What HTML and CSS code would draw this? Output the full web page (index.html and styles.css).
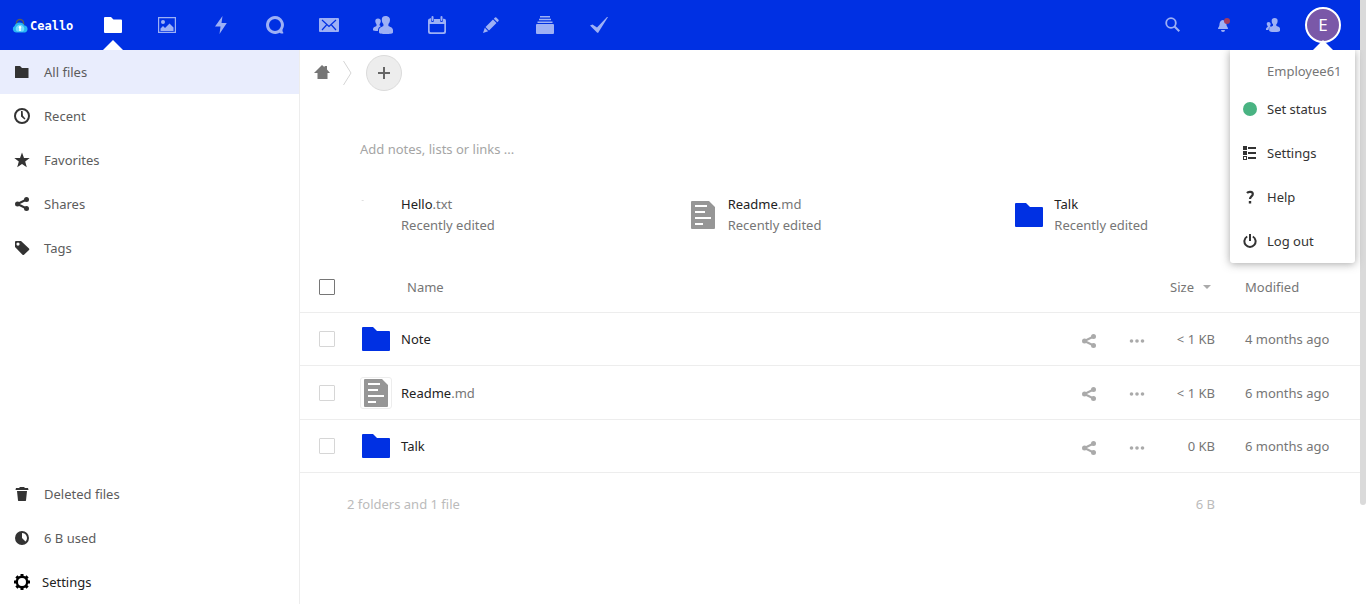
FILE: index.html
```html
<!DOCTYPE html>
<html lang="en">
<head>
<meta charset="utf-8">
<title>Files - Ceallo</title>
<link rel="stylesheet" href="styles.css">
</head>
<body>
<svg class="sprite" aria-hidden="true">
  <symbol id="folder" viewBox="0 0 28 24"><path d="M1 0h10l4 4h12a1 1 0 0 1 1 1v18a1 1 0 0 1-1 1H1a1 1 0 0 1-1-1V1a1 1 0 0 1 1-1z"/></symbol>
  <symbol id="doc" viewBox="0 0 24 28"><path fill-rule="evenodd" d="M1 0h17l6 6v21a1 1 0 0 1-1 1H1a1 1 0 0 1-1-1V1a1 1 0 0 1 1-1zM4 4v2h12V4zm0 6v2h10v-2zm0 6v2h16v-2zm0 6v2h8v-2z"/></symbol>
  <symbol id="share" viewBox="0 0 16 16"><path d="M3.500 8 12.500 3.500M3.500 8l9 4.500" fill="none" stroke="currentColor" stroke-width="2"/><circle cx="3.500" cy="8" r="2.500"/><circle cx="12.500" cy="3.500" r="2.500"/><circle cx="12.500" cy="12.500" r="2.500"/></symbol>
  <symbol id="more" viewBox="0 0 16 16"><circle cx="2.500" cy="8" r="1.800"/><circle cx="8" cy="8" r="1.800"/><circle cx="13.500" cy="8" r="1.800"/></symbol>
</svg>
<div class="page">
  <header class="topbar">
    <a class="logo" href="#">
      <svg width="16" height="16" viewBox="0 0 16 16"><path d="M4.500 7V5a3.500 3.500 0 0 1 7 0V7" fill="none" stroke="#5b5b58" stroke-width="1.500"/><path d="M4 14.500a3.500 3.500 0 0 1-1.500-6.500A5.500 5.500 0 0 1 12.500 7.500a3.600 3.600 0 0 1 .5 7z" fill="#27b4f4"/><path d="M5 13.500a3.500 3.500 0 0 1 0-5.500 4 4 0 0 1 6 0 3.500 3.500 0 0 1 0 5.500z" fill="#71d8ff"/><path d="M8 8a1.300 1.300 0 0 1 .7 2.400V13H7.300v-2.600A1.300 1.300 0 0 1 8 8z" fill="#fff"/></svg>
      <span>Ceallo</span>
    </a>
    <nav class="apps" aria-label="Apps">
      <a class="app current" href="#" aria-label="Files"><svg width="18" height="16" viewBox="0 0 18 16"><path d="M1 0h6l2.500 2.500H17a1 1 0 0 1 1 1V15a1 1 0 0 1-1 1H1a1 1 0 0 1-1-1V1a1 1 0 0 1 1-1z"/></svg></a>
      <a class="app" href="#" aria-label="Photos"><svg width="18" height="16" viewBox="0 0 18 16"><path fill-rule="evenodd" d="M0 0h18v16H0zM1.200 1.200v13.600h15.600V1.200z"/><circle cx="5" cy="5" r="2"/><path d="M2.500 14V11.500L5 9l2 2 4.500-4.500 4 4V14z"/></svg></a>
      <a class="app" href="#" aria-label="Activity"><svg width="20" height="20" viewBox="0 0 20 20"><path d="M11.500 1 4 11.500h5.500L8.500 19l7.300-11H10.500z"/></svg></a>
      <a class="app" href="#" aria-label="Talk"><svg width="20" height="20" viewBox="0 0 20 20"><path fill-rule="evenodd" d="M10 1a9 9 0 1 0 4.700 16.700c1 .8 2.300 1.100 3.300.8.500-.2.500-.6.200-1-.6-.8-.8-1.800-.7-2.700A9 9 0 0 0 10 1zm0 3a6 6 0 1 1 0 12 6 6 0 0 1 0-12z"/></svg></a>
      <a class="app" href="#" aria-label="Mail"><svg width="20" height="14" viewBox="0 0 20 14"><rect width="20" height="14" rx="1"/><path d="M3 2l7 6.500L17 2M3 12l4.500-5M17 12l-4.500-5" fill="none" stroke="#0030e3" stroke-width="1.200"/></svg></a>
      <a class="app" href="#" aria-label="Contacts"><svg width="20" height="20" viewBox="0 0 20 20"><path d="M12.500 1C10 1 8.600 2.600 8.800 5c.1 2 .8 3.200 1.600 4v2c-1 .8-4.400 1.500-4.400 4v2.500c0 1 3 1.500 7 1.500s7-.5 7-1.500V15c0-2.500-3.400-3.200-4.600-4V9c.8-.8 1.500-2 1.600-4 .2-2.400-1.900-4-4.500-4zM5 3.500c-1.800 0-2.900 1.200-2.700 3 .1 1.200.6 2 1.200 2.700V11C2.500 11.500 0 12 0 14v1.200c0 .5 2 .8 5 .8v-1c0-2 1.500-3.200 3-4l-1.400-.6V9.200c.6-.7 1-1.500 1.200-2.700.2-1.800-1-3-2.800-3z"/></svg></a>
      <a class="app" href="#" aria-label="Calendar"><svg width="18" height="18" viewBox="0 0 18 18"><path fill-rule="evenodd" d="M3 2v2.500a1 1 0 0 0 3 0V3h6v1.500a1 1 0 0 0 3 0V2.700h1a2 2 0 0 1 2 2V16a2 2 0 0 1-2 2H2a2 2 0 0 1-2-2V4.500a2 2 0 0 1 2-2zM1.700 8v7a1.300 1.300 0 0 0 1.300 1.300h12a1.300 1.300 0 0 0 1.300-1.300V8z"/><rect x="3.500" width="2" height="5" rx="1"/><rect x="12.500" width="2" height="5" rx="1"/></svg></a>
      <a class="app" href="#" aria-label="Notes"><svg width="16" height="16" viewBox="0 0 16 16"><path d="M12 .5a1 1 0 0 1 1.300 0l2.200 2.200a1 1 0 0 1 0 1.300l-1.200 1.200-3.500-3.500zM10 2.500 13.500 6 6 13.500 2.500 10zM1.800 10.800l3.400 3.400L0 16z"/></svg></a>
      <a class="app" href="#" aria-label="Deck"><svg width="18" height="18" viewBox="0 0 18 18"><rect y="8" width="18" height="10" rx="1"/><path d="M4 0h10v1.500H4zM3 2.700h12v1.500H3zM1.500 5.400h15v1.500h-15z"/></svg></a>
      <a class="app" href="#" aria-label="Tasks"><svg width="18" height="16" viewBox="0 0 18 16"><path d="M0 8.500 2.500 7.500 7 10.500 17 0h1L8 16 7 15.500z"/></svg></a>
    </nav>
    <div class="tools">
      <button class="tool" aria-label="Search"><svg width="16" height="16" viewBox="0 0 16 16"><circle cx="6" cy="6" r="4.800" fill="none" stroke="currentColor" stroke-width="1.800"/><path d="M9.300 9.300l5 5" stroke="currentColor" stroke-width="2"/></svg></button>
      <button class="tool" aria-label="Notifications"><svg width="16" height="16" viewBox="0 0 16 16"><path d="M7.500 3C5 3.500 4.500 6 4.400 8c0 1.500-1.400 2.200-1.400 4h10c0-2-1.500-2.500-1.500-4 0-3-1-4.500-4-5zM6 13h4a2 2 0 0 1-4 0z"/><circle class="alert" cx="12" cy="4" r="3"/></svg></button>
      <button class="tool" aria-label="Contacts menu"><svg width="16" height="16" viewBox="0 0 16 16"><path d="M9.700 1C7.500 1 6.500 2.300 6.700 4.200c.1 1.500.6 2.500 1.300 3.100v1.500c-.8.700-3.800 1-3.800 3v2c0 .8 2.500 1.200 5.500 1.200s5.300-.4 5.300-1.200v-2c0-2-2.800-2.300-3.700-3V7.300c.7-.6 1.200-1.600 1.300-3.100C12.800 2.300 11.800 1 9.700 1zM3.500 5C2.200 5 1.600 6 1.800 7.200c0 .8.400 1.400.9 1.800v1C2 10.500 1 10.700 1 12v1h2.500c0-2 1-3 2.500-3.500L4.800 9c.5-.5.9-1 .9-1.800C5.800 6 4.800 5 3.500 5z"/></svg></button>
      <button class="tool account" aria-label="Account menu"><span class="avatar">E</span></button>
    </div>
    <div class="menu">
      <p class="menu-user">Employee61</p>
      <a href="#"><svg width="14" height="14" viewBox="0 0 14 14"><circle cx="7" cy="7" r="7" fill="#49b382"/></svg>Set status</a>
      <a href="#"><svg width="14" height="14" viewBox="0 0 14 14"><path fill-rule="evenodd" d="M0 0h4v4H0zM0 5h4v4H0zM0 10h4v4H0zM1 11v2h2v-2zM5 1h8v2H5zM5 6h8v2H5zM5 11h8v2H5z"/></svg>Settings</a>
      <a href="#"><svg width="14" height="14" viewBox="0 0 14 14"><path d="M4 3C5.500 1.200 9.800 1.500 9.800 4 9.800 6.500 7 6.300 7 9" fill="none" stroke="currentColor" stroke-width="2.200"/><rect x="5.800" y="11" width="2.400" height="2.500"/></svg>Help</a>
      <a href="#"><svg width="14" height="14" viewBox="0 0 14 14"><path d="M4.200 2.500a5.600 5.600 0 1 0 5.600 0M7 0v7" fill="none" stroke="currentColor" stroke-width="2"/></svg>Log out</a>
    </div>
  </header>
  <div class="body">
    <nav class="sidebar" aria-label="Files">
      <div>
        <a class="item selected" href="#"><svg width="16" height="16" viewBox="0 0 16 16"><path d="M1.500 2H6l2 2h6.500v10h-13a.5.5 0 0 1-.5-.5v-11a.5.500 0 0 1 .5-.5z"/></svg>All files</a>
        <a class="item" href="#"><svg width="16" height="16" viewBox="0 0 16 16"><circle cx="8" cy="8" r="7" fill="none" stroke="currentColor" stroke-width="2"/><path d="M7 3h1.600l.4 4.700 2.500 3-1 .8L7 8.500z"/></svg>Recent</a>
        <a class="item" href="#"><svg width="16" height="16" viewBox="0 0 16 16"><path d="M8 .5 10 6h5.700l-4.500 3.600 1.600 5.700L8 12l-4.800 3.300 1.600-5.700L.3 6H6z"/></svg>Favorites</a>
        <a class="item" href="#"><svg width="16" height="16"><use href="#share"/></svg>Shares</a>
        <a class="item" href="#"><svg width="16" height="16" viewBox="0 0 16 16"><path fill-rule="evenodd" d="M2 1h5l8 7.500c.5.500.5 1 0 1.500l-5 4.700c-.5.500-1 .5-1.500 0L1 7V2a1 1 0 0 1 1-1zm2 1.500a1.600 1.600 0 1 0 0 3.200 1.600 1.600 0 0 0 0-3.200z"/></svg>Tags</a>
      </div>
      <div>
        <a class="item" href="#"><svg width="16" height="16" viewBox="0 0 16 16"><path d="M6 1h4l1 1h3l.5 2h-13L2 2h3zM3 5h10l-1 9.500a.6.6 0 0 1-.5.500h-7a.6.600 0 0 1-.5-.5z"/></svg>Deleted files</a>
        <a class="item" href="#"><svg width="16" height="16" viewBox="0 0 16 16"><path fill-rule="evenodd" d="M8 1a7 7 0 1 0 0 14A7 7 0 0 0 8 1zm0 2a5 5 0 0 1 3.500 8.500L8 8z"/></svg>6 B used</a>
        <button class="item settings"><svg width="16" height="16" viewBox="0 0 16 16"><circle cx="8" cy="8" r="5.200" fill="none" stroke="currentColor" stroke-width="2.400"/><path d="M8 0v3M8 13v3M0 8h3M13 8h3M2.400 2.400l2 2M11.600 11.600l2 2M2.400 13.600l2-2M11.600 4.400l2-2" stroke="currentColor" stroke-width="3"/></svg>Settings</button>
      </div>
    </nav>
    <main class="content">
      <div class="crumbs">
        <a class="home" href="#" aria-label="Home"><svg width="16" height="16" viewBox="0 0 16 16"><path d="M8 0l2.500 2.200V1H13v3.500L16 8h-2.500v6h-10V8H0z"/></svg></a>
        <svg class="divider" width="9" height="24" viewBox="0 0 9 24"><path d="M.5 0l7.500 12L.5 24" fill="none" stroke="#d5d5d5"/></svg>
        <button class="add" aria-label="New"><svg width="12" height="12" viewBox="0 0 12 12"><path d="M5 0h2v5h5v2H7v5H5V7H0V5h5z"/></svg></button>
      </div>
      <p class="notes">Add notes, lists or links ...</p>
      <div class="recent">
        <a class="card" href="#"><span class="thumb"><svg width="32" height="32" viewBox="0 0 32 32"><path d="M1 2l2-.6L4 2z" fill="#aaa"/></svg></span><span class="about"><span><b>Hello</b>.txt</span><span>Recently edited</span></span></a>
        <a class="card" href="#"><span class="thumb"><svg class="doc" width="24" height="28"><use href="#doc"/></svg></span><span class="about"><span><b>Readme</b>.md</span><span>Recently edited</span></span></a>
        <a class="card" href="#"><span class="thumb"><svg class="folder" width="28" height="24"><use href="#folder"/></svg></span><span class="about"><span><b>Talk</b></span><span>Recently edited</span></span></a>
      </div>
      <table class="files">
        <colgroup><col class="c-check"><col><col class="c-act"><col class="c-size"><col class="c-date"></colgroup>
        <thead>
          <tr><th class="check"><input type="checkbox" class="all" aria-label="Select all"></th><th class="head-name">Name</th><th colspan="2" class="head-size"><span class="sort">Size<svg width="8" height="4" viewBox="0 0 8 4"><path d="M0 0h8L4 4z"/></svg></span></th><th class="date">Modified</th></tr>
        </thead>
        <tbody>
          <tr>
            <td class="check"><input type="checkbox" aria-label="Select Note"></td>
            <td><a class="name" href="#"><span class="thumb"><svg class="folder" width="28" height="24"><use href="#folder"/></svg></span><span><b>Note</b></span></a></td>
            <td><div class="actions"><button aria-label="Share Note"><svg width="16" height="16"><use href="#share"/></svg></button><button aria-label="Actions for Note"><svg width="16" height="16"><use href="#more"/></svg></button></div></td>
            <td class="size">&lt; 1 KB</td><td class="date">4 months ago</td>
          </tr>
          <tr class="file">
            <td class="check"><input type="checkbox" aria-label="Select Readme.md"></td>
            <td><a class="name" href="#"><span class="thumb framed"><svg class="doc" width="24" height="28"><use href="#doc"/></svg></span><span><b>Readme</b>.md</span></a></td>
            <td><div class="actions"><button aria-label="Share Readme.md"><svg width="16" height="16"><use href="#share"/></svg></button><button aria-label="Actions for Readme.md"><svg width="16" height="16"><use href="#more"/></svg></button></div></td>
            <td class="size">&lt; 1 KB</td><td class="date">6 months ago</td>
          </tr>
          <tr>
            <td class="check"><input type="checkbox" aria-label="Select Talk"></td>
            <td><a class="name" href="#"><span class="thumb"><svg class="folder" width="28" height="24"><use href="#folder"/></svg></span><span><b>Talk</b></span></a></td>
            <td><div class="actions"><button aria-label="Share Talk"><svg width="16" height="16"><use href="#share"/></svg></button><button aria-label="Actions for Talk"><svg width="16" height="16"><use href="#more"/></svg></button></div></td>
            <td class="size">0 KB</td><td class="date">6 months ago</td>
          </tr>
        </tbody>
        <tfoot>
          <tr><td colspan="3" class="summary">2 folders and 1 file</td><td class="size">6 B</td><td></td></tr>
        </tfoot>
      </table>
    </main>
  </div>
</div>
<div class="scroll"><div class="scroll-thumb"></div></div>
</body>
</html>
```
FILE: styles.css
```css
* { box-sizing: border-box; }
body {
  margin: 0;
  display: flex;
  min-height: 100vh;
  background: #fff;
  color: #222;
  font: 13px/20px "Noto Sans", "Open Sans", sans-serif;
}
a { color: inherit; text-decoration: none; }
button { border: 0; padding: 0; background: none; font: inherit; color: inherit; cursor: pointer; }
svg { display: block; flex: none; fill: currentColor; }
p { margin: 0; }
b { font-weight: 400; color: #222; }
.sprite { position: absolute; width: 0; height: 0; }
.page { flex: 1; min-width: 0; display: flex; flex-direction: column; }

.topbar { position: relative; display: flex; height: 50px; background: #0030e3; color: #fff; }
.logo { display: flex; align-items: center; gap: 2px; width: 86px; padding: 2px 0 0 12px; font: 700 12px/16px "DejaVu Sans Mono", "Liberation Mono", monospace; }
.apps { display: flex; flex: 1; }
.app { position: relative; display: grid; place-items: center; width: 54px; color: #9db0f5; }
.app.current { color: #fff; }
.app.current::after, .account::after {
  content: "";
  position: absolute;
  bottom: 0;
  left: 50%;
  margin-left: -10px;
  border: 10px solid transparent;
  border-top: 0;
  border-bottom-color: #fff;
}
.tools { display: flex; padding-right: 12px; }
.tool { position: relative; display: grid; place-items: center; width: 50px; color: #9db0f5; }
.alert { fill: #a23a5e; }
.avatar { display: grid; place-items: center; width: 36px; height: 36px; border: 2px solid #fff; border-radius: 50%; background: #7a58a8; color: #fff; font-size: 17px; }
.menu {
  position: absolute;
  z-index: 2;
  top: 100%;
  right: 5px;
  width: 125px;
  background: #fff;
  color: #222;
  border-radius: 0 0 3px 3px;
  box-shadow: 0 1px 8px rgba(77, 77, 77, .5);
  clip-path: inset(0 -12px -12px -12px);
}
.menu-user { height: 37px; padding: 11px 0 0 37px; color: #767676; }
.menu a { display: flex; align-items: center; gap: 10px; height: 44px; padding-left: 13px; color: #333; }

.body { flex: 1; display: flex; }
.sidebar { display: flex; flex-direction: column; justify-content: space-between; width: 300px; border-right: 1px solid #ededed; }
.item { display: flex; align-items: center; gap: 14px; width: 100%; height: 44px; padding-left: 14px; color: #5c5c5c; }
.item svg { color: #333; }
.selected { background: #e9edfd; }
.settings { gap: 12px; color: #222; }
.settings svg { color: #000; }

.content { flex: 1; min-width: 0; color: #767676; }
.crumbs { display: flex; align-items: center; height: 46px; padding-left: 14px; }
.divider { margin: 0 14px 0 13px; }
.add { display: grid; place-items: center; width: 36px; height: 36px; border: 1px solid #dbdbdb; border-radius: 50%; background: #ededed; color: #666; }
.notes { padding: 43px 0 0 60px; color: #a5a5a5; }
.recent { display: grid; grid-template-columns: repeat(3, 1fr); padding: 35px 20px 0 60px; }
.card { display: flex; align-items: center; gap: 9px; }
.about { display: flex; flex-direction: column; line-height: 21px; }
.thumb { display: grid; place-items: center; flex: none; width: 32px; height: 32px; }
.framed { border: 1px solid #ededed; border-radius: 3px; }
.folder { color: #0030e3; }
.doc { color: #969696; }

.files { width: 100%; margin-top: 26px; table-layout: fixed; border-collapse: separate; border-spacing: 0; }
.c-check { width: 60px; }
.c-act { width: 96px; }
.c-size { width: 54px; }
.c-date { width: 145px; }
.files th, .files td { height: 53px; padding: 0; font-weight: 400; text-align: left; border-bottom: 1px solid #ededed; }
.files thead th { height: 51px; }
.files .file td { height: 54px; }
.files tfoot td { height: 62px; border: 0; color: #bbb; }
.files .check { padding-left: 19px; }
.check input { appearance: none; display: block; width: 16px; height: 16px; margin: 0; border: 1px solid #d6d6d6; border-radius: 1px; background: #fff; }
.check .all { border-color: #767676; }
.files .head-name { padding-left: 47px; }
.files .head-size { padding-right: 4px; }
.sort { display: flex; align-items: center; justify-content: flex-end; gap: 9px; }
.sort svg { color: #aaa; }
.files .date { padding-left: 30px; }
.files .size { text-align: right; }
.files .summary { padding-left: 47px; }
.name { display: flex; align-items: center; gap: 9px; }
.actions { display: flex; padding-top: 3px; color: #aaa; }
.actions button { display: grid; place-items: center; width: 48px; height: 44px; }

.scroll { width: 6px; }
.scroll-thumb { height: 505px; border-radius: 0 0 3px 3px; background: #dadada; }
```
